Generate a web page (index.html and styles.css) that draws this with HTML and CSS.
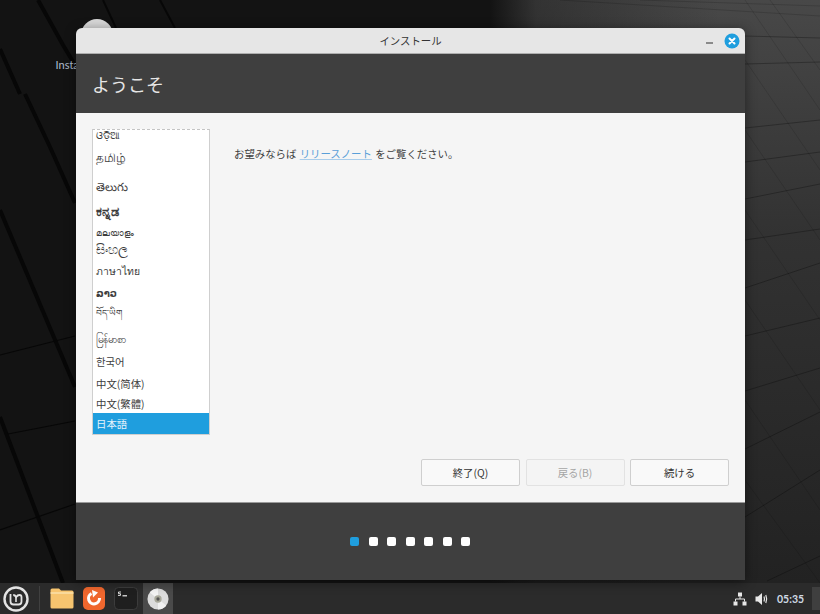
FILE: index.html
```html
<!DOCTYPE html>
<html lang="ja">
<head>
  <meta charset="UTF-8">
  <title>インストール</title>
  <link rel="stylesheet" href="styles.css">
</head>
<body>
  <div class="desktop">
    <!-- Desktop background facets -->
    <svg class="wallpaper" width="820" height="583" viewBox="0 0 820 583">
      <defs>
        <linearGradient id="wall-right" x1="0" y1="0" x2="0" y2="1">
          <stop offset="0" stop-color="#484848"/>
          <stop offset="0.4" stop-color="#323232"/>
          <stop offset="1" stop-color="#222222"/>
        </linearGradient>
        <linearGradient id="wall-fade" x1="0" y1="0" x2="1" y2="0">
          <stop offset="0" stop-color="#131313"/>
          <stop offset="0.2" stop-color="#131313" stop-opacity="0.4"/>
          <stop offset="1" stop-color="#131313" stop-opacity="0"/>
        </linearGradient>
      </defs>
      <rect width="820" height="583" fill="url(#wall-right)"/>
      <rect width="490" height="583" fill="#131313"/>
      <rect x="490" width="230" height="583" fill="url(#wall-fade)"/>
      <g fill="none" stroke="#070707">
        <path d="M0 49L20 94M25 94L50 147L75 203M38 0L63 45L75 65M0 210L75 387M0 417L63 583" stroke-width="4"/>
        <path d="M103 0L116 28M160 0L175 28" stroke-width="2"/>
        <path d="M0 530L75 504M8 434L75 421M0 355L75 336" stroke-width="1.200"/>
      </g>
      <g fill="none" stroke="#000" stroke-opacity="0.28">
        <path d="M745 36L820 38M745 64L820 62M745 128L820 120M745 162L820 152M745 199L820 184M745 240L820 229M745 288L820 263M745 336L820 318M745 391L820 368M745 449L820 412M745 517L820 470M767 581L820 556"/>
        <path d="M560 0L820 16M640 0L820 6" stroke-opacity="0.15"/>
      </g>
      <g fill="none" stroke="#000" stroke-opacity="0.12">
        <path d="M745 0L820 110M770 0L820 70M745 60L820 170M745 130L820 240M745 210L820 320M745 300L820 410M745 400L820 510M745 480L820 583"/>
      </g>
    </svg>

    <div class="desktop-icon">
      <div class="disc-top"></div>
      <span class="desktop-label">Install Linux Mint</span>
    </div>

    <div class="window">
      <div class="titlebar">
        <span class="title">インストール</span>
        <span class="minimize"></span>
        <svg class="close" width="16" height="16" viewBox="0 0 16 16">
          <circle cx="8" cy="8" r="7.5" fill="#1f9ede"/>
          <path d="M5.500 5.500L10.500 10.500M10.500 5.500L5.500 10.500" stroke="#fff" stroke-width="2" stroke-linecap="round"/>
        </svg>
      </div>

      <div class="header"><h1>ようこそ</h1></div>

      <div class="main">
        <div class="columns">
          <div class="lang-list">
            <div class="lang h26">ଓଡ଼ିଆ</div>
            <div class="lang h21 tamil">தமிழ்</div>
            <div class="lang h29 telugu">తెలుగు</div>
            <div class="lang h26 kannada">ಕನ್ನಡ</div>
            <div class="lang h18 malayalam">മലയാളം</div>
            <div class="lang h19 sinhala">සිංහල</div>
            <div class="lang h23">ภาษาไทย</div>
            <div class="lang h19 lao">ລາວ</div>
            <div class="lang h26 tibetan">བོད་ཡིག</div>
            <div class="lang h22">မြန်မာစာ</div>
            <div class="lang h23">한국어</div>
            <div class="lang h20">中文(简体)</div>
            <div class="lang h20">中文(繁體)</div>
            <div class="lang h21 selected">日本語</div>
          </div>
          <p class="notes">お望みならば <a href="#">リリースノート</a> をご覧ください。</p>
        </div>

        <div class="buttons">
          <button>終了(Q)</button>
          <button disabled>戻る(B)</button>
          <button>続ける</button>
        </div>
      </div>

      <div class="footer">
        <span class="dot active"></span>
        <span class="dot"></span>
        <span class="dot"></span>
        <span class="dot"></span>
        <span class="dot"></span>
        <span class="dot"></span>
        <span class="dot"></span>
      </div>
    </div>
  </div>

  <div class="taskbar">
    <div class="launchers">
      <!-- Mint menu -->
      <svg class="menu-logo" width="26" height="26" viewBox="0 0 26 26">
        <circle cx="13" cy="13" r="11.500" fill="none" stroke="#e4e4e4" stroke-width="2.400"/>
        <path d="M7.500 8V15.500Q7.500 18.500 10.500 18.500H15.500Q18.500 18.500 18.500 15.500V11Q18.500 9 16.500 9Q14.500 9 13.200 11Q12 9 10.200 9" fill="none" stroke="#e4e4e4" stroke-width="1.800"/>
        <path d="M13 11V16" stroke="#e4e4e4" stroke-width="1.600"/>
      </svg>
      <span class="separator"></span>
      <!-- Files -->
      <svg class="launcher" width="24" height="21" viewBox="0 0 24 21">
        <path d="M0.500 2Q0.500 0.500 2 0.500H9L11 2.500H22Q23.500 2.500 23.500 4V19Q23.500 20.500 22 20.500H2Q0.500 20.500 0.500 19Z" fill="#f6c46f"/>
        <path d="M0.500 5H23.500" stroke="#fbe2ae" stroke-width="1.400"/>
      </svg>
      <!-- Firefox -->
      <svg class="launcher" width="22" height="23" viewBox="0 0 22 23">
        <rect width="22" height="23" rx="5" fill="#f0672e"/>
        <path d="M8.500 6.500A5.500 5.500 0 1 0 16.500 11" fill="none" stroke="#fff" stroke-width="3"/>
        <path d="M9 3L15 5.500L10 10.500Z" fill="#fff"/>
      </svg>
      <!-- Terminal -->
      <svg class="launcher" width="24" height="23" viewBox="0 0 24 23">
        <rect x="0.500" y="0.500" width="23" height="22" rx="4" fill="#1f1f1f" stroke="#3c3c3c"/>
        <path d="M7 5H4.500V6.700H6.500V8.400H4" fill="none" stroke="#eee" stroke-width="0.900"/>
        <path d="M8.500 8.800H13" stroke="#eee" stroke-width="1.200"/>
      </svg>
      <!-- Running installer -->
      <div class="launcher-active">
        <svg width="22" height="22" viewBox="0 0 24 24">
          <circle cx="12" cy="12" r="11.500" fill="#dcdcdc"/>
          <path d="M12 12L3 5A11.500 11.500 0 0 1 12 0.500Z" fill="#f4f4f4"/>
          <path d="M12 12L21 19A11.500 11.500 0 0 1 12 23.500Z" fill="#f0f0f0"/>
          <circle cx="12" cy="12" r="4" fill="#a8a89a"/>
          <circle cx="12" cy="12" r="1.800" fill="#555"/>
        </svg>
      </div>
    </div>

    <div class="tray">
      <svg width="14" height="14" viewBox="0 0 14 14">
        <path d="M5 0.500H9V4.500H5ZM0.500 9.500H4.500V13.500H0.500ZM9.500 9.500H13.500V13.500H9.500Z" fill="#e8e8e8"/>
        <path d="M7 4.500V7M2.500 9.500V7H11.500V9.500" fill="none" stroke="#e8e8e8"/>
      </svg>
      <svg width="14" height="14" viewBox="0 0 14 14">
        <path d="M0.500 4.500H3L7 1V13L3 9.500H0.500Z" fill="#e8e8e8"/>
        <path d="M9 4.500Q10 7 9 9.500M10.800 3Q12.500 7 10.800 11" fill="none" stroke="#e8e8e8" stroke-width="1.200"/>
      </svg>
      <span class="clock">05:35</span>
      <span class="show-desktop"></span>
    </div>
  </div>
</body>
</html>
```

FILE: styles.css
```css
* {
  margin: 0;
  padding: 0;
  box-sizing: border-box;
}

body {
  width: 820px;
  height: 614px;
  overflow: hidden;
  display: flex;
  flex-direction: column;
  background-color: #141414;
  font-family: "Noto Sans CJK JP", "Noto Sans", "DejaVu Sans", sans-serif;
  font-size: 10.4px;
  color: #3d3d3d;
}

/* Desktop */
.desktop {
  position: relative;
  flex: 1;
}

.wallpaper {
  position: absolute;
  top: 0;
  left: 0;
}

.desktop-icon {
  position: absolute;
  top: 19px;
  left: 49px;
  width: 96px;
  display: flex;
  flex-direction: column;
  align-items: center;
}

.disc-top {
  width: 32px;
  height: 32px;
  border-radius: 50%;
  background-color: #d8d8d8;
}

.desktop-label {
  margin-top: 7px;
  font-family: "Lato", sans-serif;
  font-size: 11px;
  color: #aebccd;
  white-space: nowrap;
}

/* Installer window */
.window {
  position: absolute;
  top: 28px;
  left: 76px;
  width: 669px;
  height: 552px;
  display: flex;
  flex-direction: column;
  border-radius: 6px 6px 0 0;
  overflow: hidden;
  box-shadow: 0 2px 12px rgba(0, 0, 0, 0.45);
}

.titlebar {
  position: relative;
  height: 26px;
  flex-shrink: 0;
  display: flex;
  align-items: center;
  justify-content: center;
  background-color: #e6e6e6;
  border-bottom: 1px solid #aeaeae;
}

.title {
  font-size: 10.4px;
  color: #333;
}

.minimize {
  position: absolute;
  top: 14px;
  left: 630px;
  width: 7px;
  height: 2px;
  background-color: #8a8a8a;
}

.close {
  position: absolute;
  top: 5px;
  left: 648px;
}

.header {
  height: 59px;
  flex-shrink: 0;
  display: flex;
  align-items: center;
  padding-left: 16px;
  background-color: #3f3f3f;
}

.header h1 {
  font-size: 18px;
  font-weight: 400;
  color: #e6e6e6;
}

.main {
  flex: 1;
  display: flex;
  flex-direction: column;
  background-color: #f5f5f5;
  padding: 16px;
}

.columns {
  flex: 1;
  display: flex;
}

.lang-list {
  width: 118px;
  height: 306px;
  flex-shrink: 0;
  display: flex;
  flex-direction: column;
  justify-content: flex-end;
  overflow: hidden;
  background-color: #fff;
  border: 1px solid #cfcfcf;
  border-top: 1px dashed #c4c4c4;
}

.lang {
  flex-shrink: 0;
  display: flex;
  align-items: center;
  padding-left: 3px;
  font-size: 10.4px;
  color: #3d3d3d;
}

.selected {
  background-color: #1f9ede;
  color: #e8f4fb;
}

/* The script fallbacks differ a lot in size and baseline */
.tamil {
  font-size: 11.5px;
}

.telugu {
  padding-top: 9px;
  font-size: 11.5px;
  font-weight: 300;
}

.kannada {
  font-size: 12.5px;
  font-weight: 700;
}

.malayalam {
  font-size: 8.5px;
}

.sinhala {
  padding-bottom: 5px;
  font-size: 12.5px;
}

.lao {
  font-size: 10px;
  font-weight: 700;
}

.tibetan {
  font-size: 9px;
}

.h18 { height: 18px; }
.h19 { height: 19px; }
.h20 { height: 20px; }
.h21 { height: 21px; }
.h22 { height: 22px; }
.h23 { height: 23px; }
.h26 { height: 26px; }
.h29 { height: 29px; }

.notes {
  margin: 17px 0 0 24px;
  font-size: 10.4px;
  line-height: 16px;
  word-spacing: 1px;
  color: #3d3d3d;
}

.notes a {
  color: #5a9fd8;
  text-decoration: underline;
  text-decoration-color: #a9cdeb;
}

.buttons {
  display: flex;
  justify-content: flex-end;
  gap: 5.5px;
}

.buttons button {
  width: 99px;
  height: 27px;
  font-family: inherit;
  font-size: 10.4px;
  color: #333;
  background-color: #f9f9f9;
  border: 1px solid #cfcfcf;
  border-radius: 2px;
}

.buttons button:disabled {
  color: #a5a5a5;
  background-color: #f4f4f4;
  border-color: #e2e2e2;
}

.footer {
  height: 78px;
  flex-shrink: 0;
  display: flex;
  align-items: center;
  justify-content: center;
  gap: 9.5px;
  padding-right: 1px;
  background-color: #3f3f3f;
  border-top: 1px solid #9a9a9a;
}

.dot {
  width: 9px;
  height: 9px;
  border-radius: 2px;
  background-color: #fff;
}

.dot.active {
  background-color: #1f9ede;
}

/* Bottom panel */
.taskbar {
  height: 31px;
  flex-shrink: 0;
  display: flex;
  align-items: center;
  justify-content: space-between;
  background-color: #2b2b2b;
}

.launchers {
  display: flex;
  align-items: center;
  height: 100%;
}

.menu-logo {
  margin-left: 3px;
}

.separator {
  width: 1px;
  height: 25px;
  margin: 0 10px;
  background-color: #404040;
}

.launcher {
  margin-right: 9px;
}

.launcher-active {
  width: 30px;
  height: 100%;
  margin-left: -4px;
  display: flex;
  align-items: center;
  justify-content: center;
  background-color: #4a4a4a;
}

.tray {
  display: flex;
  align-items: center;
  gap: 8px;
}

.clock {
  width: 27px;
  font-family: "Lato", sans-serif;
  font-size: 10.5px;
  font-weight: 700;
  white-space: nowrap;
  color: #cfd9e4;
}

.show-desktop {
  width: 8px;
  height: 23px;
  background-color: #3f3f3f;
}
```
